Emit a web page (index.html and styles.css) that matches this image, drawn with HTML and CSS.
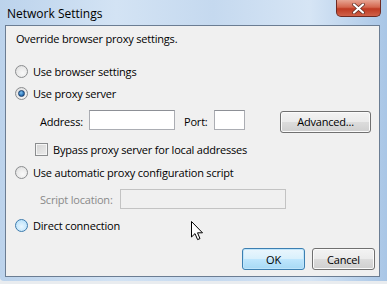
FILE: index.html
```html
<!DOCTYPE html>
<html lang="en">
<head>
  <meta charset="UTF-8" />
  <meta name="viewport" content="width=device-width, initial-scale=1" />
  <title>Network Settings</title>
  <link rel="stylesheet" href="styles.css">
</head>
<body>
  <div class="window">
    <div class="titlebar">
      <span class="title">Network Settings</span>
      <button type="button" class="close-button" aria-label="Close">
        <svg width="13" height="11" viewBox="0 0 13 11">
          <path d="M2 1.5 L11 9.5 M11 1.5 L2 9.5" stroke="#5a2a20" stroke-width="3.6" stroke-linecap="round" />
          <path d="M2 1.5 L11 9.5 M11 1.5 L2 9.5" stroke="#ffffff" stroke-width="2.2" stroke-linecap="round" />
        </svg>
      </button>
    </div>

    <div class="client">
      <p class="intro">Override browser proxy settings.</p>

      <div class="option first">
        <span class="radio"></span>
        <span>Use browser settings</span>
      </div>

      <div class="option">
        <span class="radio checked"></span>
        <span>Use proxy server</span>
      </div>

      <div class="proxy-row">
        <span class="label address-label">Address:</span>
        <span class="field address-field"></span>
        <span class="label port-label">Port:</span>
        <span class="field port-field"></span>
        <button type="button" class="win-button advanced-button">Advanced...</button>
      </div>

      <div class="check-row">
        <span class="checkbox"></span>
        <span>Bypass proxy server for local addresses</span>
      </div>

      <div class="option auto">
        <span class="radio"></span>
        <span>Use automatic proxy configuration script</span>
      </div>

      <div class="script-row">
        <span class="label script-label">Script location:</span>
        <span class="field script-field"></span>
      </div>

      <div class="option direct">
        <span class="radio hover"></span>
        <span>Direct connection</span>
      </div>

      <div class="button-row">
        <button type="button" class="win-button default-button">OK</button>
        <button type="button" class="win-button">Cancel</button>
      </div>
    </div>

    <!-- mouse pointer sitting over the dialog -->
    <svg class="pointer" width="13" height="20" viewBox="0 0 13 20">
      <path d="M0.5 0.5 L0.5 16 L4 12.6 L6.6 18.6 L9 17.6 L6.5 11.8 L11.5 11.8 Z" fill="#ffffff" stroke="#000000" stroke-width="1" stroke-linejoin="round" />
    </svg>
  </div>
</body>
</html>
```

FILE: styles.css
```css
body {
  margin: 0;
  background-color: #e9ecef;
  font-family: 'Open Sans', 'Liberation Sans', sans-serif;
  font-size: 11px;
  color: #000000;
}
.window {
  position: relative;
  width: 387px;
  height: 281px;
  box-sizing: border-box;
  padding: 0 7px 4px 5px;
  background: linear-gradient(90deg, #bcd3ec 0%, #d3e3f4 30%, #c5d9ef 55%, #d6e5f5 80%, #a9c6e6 100%);
  border-bottom-left-radius: 4px;
}
.titlebar {
  height: 25px;
  display: flex;
  align-items: flex-start;
  justify-content: space-between;
}
.title {
  margin: 5px 0 0 2px;
  font-size: 12px;
  color: #000000;
}
.close-button {
  width: 45px;
  height: 17px;
  margin-right: -1px;
  padding: 0;
  border: 1px solid #6e2a22;
  border-top: none;
  border-radius: 0 0 5px 5px;
  background: linear-gradient(#e7a593 0%, #d4664e 45%, #bf3a22 55%, #d0624a 100%);
  display: flex;
  align-items: center;
  justify-content: center;
}
.client {
  height: 252px;
  box-sizing: border-box;
  border: 1px solid #6b7d93;
  background-color: #f0f0f0;
  padding: 5px 4px 0 9px;
  letter-spacing: -0.2px;
}
.intro {
  margin: 0 0 0 1px;
  height: 16px;
  line-height: 16px;
}
.option,
.check-row {
  display: flex;
  align-items: center;
  height: 16px;
}
.option.first {
  margin-top: 16px;
}
.option {
  margin-top: 6px;
}
.option.auto {
  margin-top: 7px;
}
.option.direct {
  margin-top: 8px;
}
.radio {
  width: 11px;
  height: 11px;
  margin-right: 5px;
  border: 1px solid #8b8d8f;
  border-radius: 50%;
  background: radial-gradient(circle at 60% 65%, #f9f9f9 0%, #e8e8e8 60%, #d2d2d2 100%);
  display: flex;
  align-items: center;
  justify-content: center;
}
.radio.checked::after {
  content: "";
  width: 5px;
  height: 5px;
  border-radius: 50%;
  border: 1px solid #1b3f6b;
  background: radial-gradient(circle at 40% 35%, #7fc2f0 0%, #2d74b8 60%, #19477c 100%);
}
.radio.hover {
  border-color: #3d7bad;
  background: radial-gradient(circle at 50% 60%, #e9f6fe 0%, #bfe4fb 70%, #a5d6f6 100%);
}
.proxy-row {
  display: flex;
  align-items: center;
  height: 22px;
  margin-top: 9px;
  padding-left: 25px;
}
.label {
  flex: none;
}
.address-label {
  width: 49px;
}
.port-label {
  width: 30px;
  margin-left: 9px;
}
.field {
  box-sizing: border-box;
  border: 1px solid #abadb3;
  border-top-color: #8d9096;
  background-color: #ffffff;
  align-self: flex-start;
  height: 20px;
}
.address-field {
  width: 86px;
}
.port-field {
  width: 31px;
}
.win-button {
  height: 22px;
  padding: 0;
  font-family: inherit;
  font-size: 11px;
  letter-spacing: -0.2px;
  color: #000000;
  border: 1px solid #707070;
  border-radius: 3px;
  background: linear-gradient(#f3f3f3 0%, #ebebeb 48%, #dcdcdc 52%, #cfcfcf 100%);
  box-shadow: inset 0 0 0 1px #fbfbfb;
}
.advanced-button {
  width: 91px;
  margin-left: 35px;
  margin-top: 1px;
}
.check-row {
  margin-top: 9px;
  padding-left: 20px;
}
.checkbox {
  width: 11px;
  height: 11px;
  margin-right: 5px;
  border: 1px solid #8b8d8f;
  background: linear-gradient(135deg, #d4d4d4 0%, #ececec 100%);
  box-shadow: inset 0 0 0 1px #f5f5f5;
}
.script-row {
  display: flex;
  align-items: center;
  height: 20px;
  margin-top: 9px;
  padding-left: 25px;
  color: #8a8a8a;
}
.script-label {
  width: 80px;
}
.script-field {
  width: 166px;
  border-color: #c3c3c3;
  background-color: #f0f0f0;
}
.button-row {
  display: flex;
  justify-content: flex-end;
  gap: 7px;
  margin-top: 15px;
}
.button-row .win-button {
  width: 63px;
}
.default-button {
  border-color: #3c7fb1;
  background: linear-gradient(#eaf6fd 0%, #d9f0fc 48%, #bee6fd 52%, #a7d9f5 100%);
  box-shadow: inset 0 0 0 1px #bfe5fb;
}
.pointer {
  position: absolute;
  left: 191px;
  top: 221px;
}
```
